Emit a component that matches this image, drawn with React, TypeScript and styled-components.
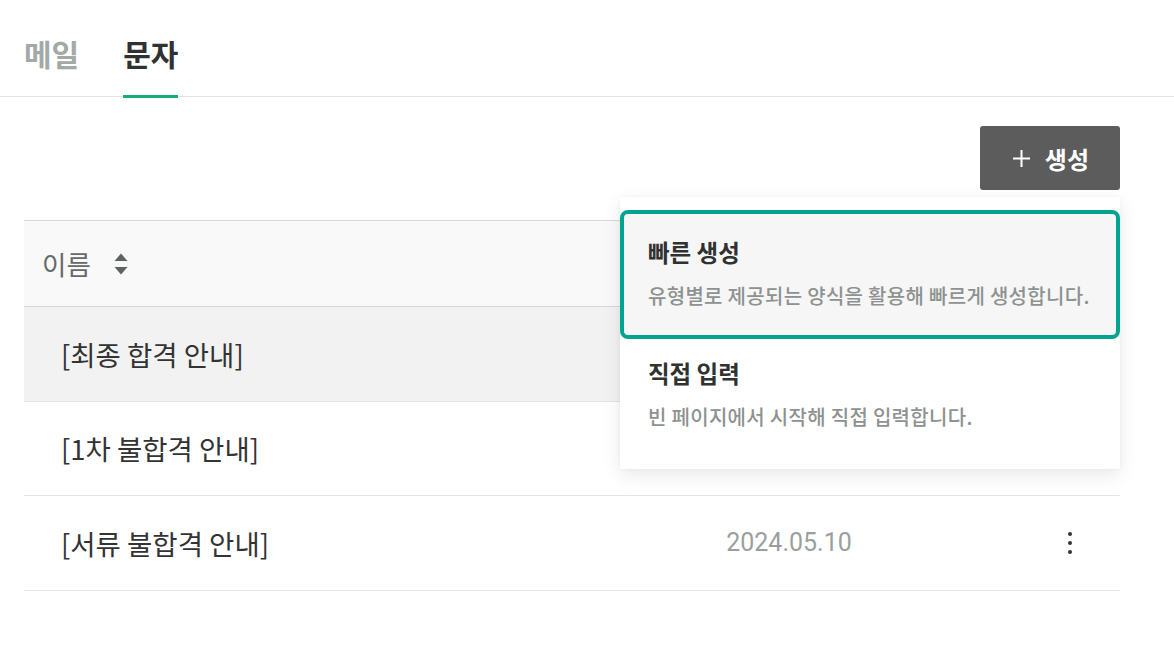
import React from 'react';
import styled, { createGlobalStyle } from 'styled-components';

type Template = {
  id: number,
  name: string,
  updatedAt: string
}

const templates: Array<Template> = [
  { id: 1, name: '[최종 합격 안내]', updatedAt: '2024.05.10' },
  { id: 2, name: '[1차 불합격 안내]', updatedAt: '2024.05.10' },
  { id: 3, name: '[서류 불합격 안내]', updatedAt: '2024.05.10' },
];

const createOptions = [
  { title: '빠른 생성', desc: '유형별로 제공되는 양식을 활용해 빠르게 생성합니다.' },
  { title: '직접 입력', desc: '빈 페이지에서 시작해 직접 입력합니다.' },
];

const GlobalStyle = createGlobalStyle`
  * {
    box-sizing: border-box;
  }
  body {
    margin: 0;
    background: #ffffff;
    font-family: "Noto Sans CJK KR", "Noto Sans", sans-serif;
    color: #333333;
  }
`;

const Page = styled.div`
  width: 100%;
  min-height: 646px;
`;

const TabBar = styled.div`
  display: flex;
  align-items: flex-start;
  gap: 44px;
  height: 97px;
  padding: 0 24px;
  border-bottom: 1px solid #e3e3e3;
`;

const Tab = styled.div<{ $active?: boolean }>`
  height: 98px;
  padding-top: 32px;
  line-height: 42px;
  font-size: 30px;
  font-weight: 700;
  color: ${p => (p.$active ? '#2f3230' : '#a2a9a7')};
  border-bottom: 3px solid ${p => (p.$active ? '#14ae7c' : 'transparent')};
  cursor: pointer;
`;

const Content = styled.div`
  padding: 29px 54px 0 24px;
`;

const Toolbar = styled.div`
  position: relative;
  display: flex;
  justify-content: flex-end;
`;

const CreateButton = styled.button`
  display: flex;
  align-items: center;
  gap: 14px;
  height: 64px;
  padding: 0 31px 0 32px;
  border: none;
  border-radius: 3px;
  background: #5b5c5b;
  color: #ffffff;
  font-family: inherit;
  font-size: 24px;
  font-weight: 700;
  cursor: pointer;
`;

const Dropdown = styled.div`
  position: absolute;
  top: calc(100% + 7px);
  right: 0;
  width: 500px;
  padding: 13px 0;
  background: #ffffff;
  box-shadow: 0 6px 18px rgba(0, 0, 0, 0.09), 0 0 4px rgba(0, 0, 0, 0.04);
  z-index: 10;
`;

const Option = styled.div<{ $active?: boolean }>`
  display: flex;
  flex-direction: column;
  gap: 14px;
  padding: ${p => (p.$active ? '22px 24px 25px' : '18px 28px 25px')};
  border: ${p => (p.$active ? '4px solid #00a48f' : 'none')};
  border-radius: 8px;
  background: ${p => (p.$active ? '#f6f6f6' : '#ffffff')};
  cursor: pointer;
`;

const OptionTitle = styled.div`
  font-size: 23.5px;
  line-height: 32px;
  font-weight: 700;
  color: #303231;
`;

const OptionDesc = styled.div`
  font-size: 20px;
  line-height: 28px;
  letter-spacing: 0.3px;
  font-weight: 500;
  color: #8d9290;
`;

const Table = styled.div`
  margin-top: 30px;
  border-top: 1px solid #d9d9d9;
`;

const HeaderRow = styled.div`
  display: grid;
  grid-template-columns: 1fr 462px 100px;
  align-items: center;
  height: 86px;
  background: #f9f9f9;
  border-bottom: 1px solid #d6d6d6;
`;

const HeaderCell = styled.div`
  display: flex;
  align-items: center;
  gap: 23px;
  padding-left: 18px;
  font-size: 26.5px;
  color: #666a68;
`;

const Row = styled.div<{ $hover?: boolean }>`
  display: grid;
  grid-template-columns: 1fr 462px 100px;
  align-items: center;
  height: 94.5px;
  background: ${p => (p.$hover ? '#f2f2f2' : '#ffffff')};
  border-bottom: 1px solid #e4e4e4;
`;

const NameCell = styled.div`
  padding-left: 37px;
  font-size: 27.5px;
  color: #333333;
`;

const DateCell = styled.div`
  text-align: center;
  font-family: Roboto, "Noto Sans", sans-serif;
  font-size: 25px;
  color: #9a9f9d;
`;

const MenuCell = styled.div`
  display: flex;
  justify-content: center;
  align-items: center;
`;

const KebabButton = styled.button`
  display: flex;
  padding: 0;
  border: none;
  background: none;
  cursor: pointer;
`;

const PlusIcon = () => (
  <svg width="19" height="19" viewBox="0 0 19 19">
    <path d="M9.5 1v17M1 9.5h17" stroke="#ffffff" strokeWidth="2" fill="none" />
  </svg>
);

const SortIcon = () => (
  <svg width="14" height="22" viewBox="0 0 14 22">
    <path d="M7 0.5L13.5 8H0.5Z" fill="#5f6461" />
    <path d="M7 21.5L13.5 14H0.5Z" fill="#5f6461" />
  </svg>
);

const KebabIcon = () => (
  <svg width="6" height="26" viewBox="0 0 6 26">
    <circle cx="3" cy="4" r="2" fill="#333333" />
    <circle cx="3" cy="13" r="2" fill="#333333" />
    <circle cx="3" cy="22" r="2" fill="#333333" />
  </svg>
);

class App extends React.Component<{}, { tab: string, menuOpen: boolean }> {
  constructor(props: {}) {
    super(props);
    this.state = { tab: 'sms', menuOpen: true };
    this.toggleMenu = this.toggleMenu.bind(this);
  }

  toggleMenu() {
    this.setState({ menuOpen: !this.state.menuOpen });
  }

  render() {
    return (
      <Page>
        <GlobalStyle />
        <TabBar>
          <Tab $active={this.state.tab === 'mail'} onClick={() => this.setState({ tab: 'mail' })}>메일</Tab>
          <Tab $active={this.state.tab === 'sms'} onClick={() => this.setState({ tab: 'sms' })}>문자</Tab>
        </TabBar>
        <Content>
          <Toolbar>
            <CreateButton onClick={this.toggleMenu}>
              <PlusIcon />
              생성
            </CreateButton>
            {this.state.menuOpen && (
              <Dropdown>
                {createOptions.map((option, i) => (
                  <Option key={option.title} $active={i === 0}>
                    <OptionTitle>{option.title}</OptionTitle>
                    <OptionDesc>{option.desc}</OptionDesc>
                  </Option>
                ))}
              </Dropdown>
            )}
          </Toolbar>
          <Table>
            <HeaderRow>
              <HeaderCell>
                이름
                <SortIcon />
              </HeaderCell>
              <div />
              <div />
            </HeaderRow>
            {templates.map((t, i) => (
              <Row key={t.id} $hover={i === 0}>
                <NameCell>{t.name}</NameCell>
                <DateCell>{t.updatedAt}</DateCell>
                <MenuCell>
                  <KebabButton>
                    <KebabIcon />
                  </KebabButton>
                </MenuCell>
              </Row>
            ))}
          </Table>
        </Content>
      </Page>
    );
  }
}

export default App;
